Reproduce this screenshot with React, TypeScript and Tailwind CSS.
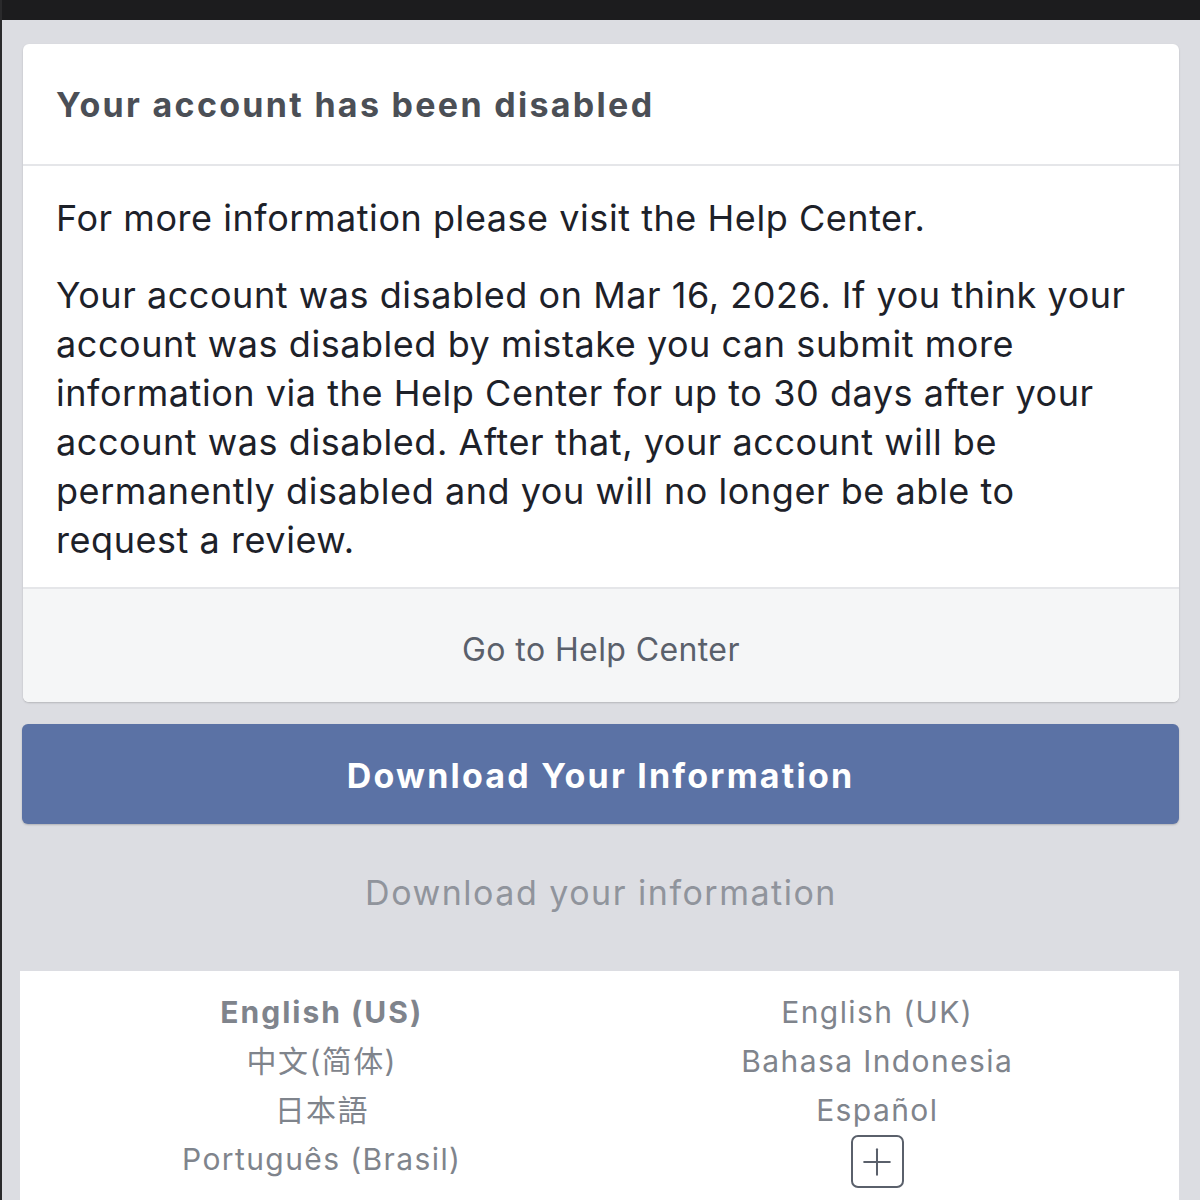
import { Plus } from 'lucide-react'

const leftLangs = ['English (US)', '中文(简体)', '日本語', 'Português (Brasil)']
const rightLangs = ['English (UK)', 'Bahasa Indonesia', 'Español']

export default function App() {
  return (
    <div
      className="w-[1200px] h-[1200px] overflow-hidden bg-[#dcdde2] border-l-2 border-[#2a2a2c] flex flex-col"
      style={{ fontFamily: 'Inter, "Noto Sans CJK SC", sans-serif' }}
    >
      <div className="h-[20px] bg-[#1c1c1e] -ml-[2px] shrink-0" />

      <div className="pl-[21px] pr-[21px] pt-[24px] flex flex-col">
        <div className="bg-white rounded-[6px] shadow-[0_1px_2px_rgba(0,0,0,0.18)] overflow-hidden">
          <div className="h-[122px] border-b-2 border-[#e5e6e9] pl-[33px] flex items-center pt-[1px]">
            <h1 className="text-[34px] font-bold text-[#4b4f56] tracking-[2.3px]">Your account has been disabled</h1>
          </div>
          <div className="pl-[33px] pr-[50px] pt-[28px] pb-[22px] text-[36px] leading-[49px] text-[#1d2129] tracking-[0.55px] border-b-2 border-[#e5e6e9]">
            <p className="mb-[28px]">For more information please visit the Help Center.</p>
            <p>
              Your account was disabled on Mar 16, 2026. If you think your account was disabled by mistake you can
              submit more information via the Help Center for up to 30 days after your account was disabled. After
              that, your account will be permanently disabled and you will no longer be able to request a review.
            </p>
          </div>
          <div className="h-[113px] bg-[#f5f6f7] flex items-center justify-center pt-[8px]">
            <span className="text-[32px] tracking-[0.4px] text-[#5a606b]">Go to Help Center</span>
          </div>
        </div>

        <button className="mt-[22px] -ml-[1px] h-[100px] rounded-[6px] bg-[#5b72a5] shadow-[0_1px_2px_rgba(0,0,0,0.2)] flex items-center justify-center pt-[2px]">
          <span className="text-[34px] font-bold tracking-[2.2px] text-white">Download Your Information</span>
        </button>

        <div className="h-[147px] flex items-center justify-center pb-[10px]">
          <span className="text-[34px] tracking-[1.5px] text-[#90949c]">Download your information</span>
        </div>
      </div>

      <div className="ml-[18px] mr-[21px] flex-1 bg-white grid grid-cols-2 px-[24px] pt-[17px] text-[30px] leading-[49px] tracking-[1.4px] text-[#7f848c]">
        <div className="flex flex-col items-center">
          {leftLangs.map((l, i) => (
            <span key={l} className={i === 0 ? 'font-bold tracking-[2px]' : ''}>{l}</span>
          ))}
        </div>
        <div className="flex flex-col items-center">
          {rightLangs.map(l => (
            <span key={l}>{l}</span>
          ))}
          <div className="w-[53px] h-[53px] border-2 border-[#5a606b] rounded-[7px] flex items-center justify-center">
            <Plus size={44} strokeWidth={1.1} className="text-[#5a606b]" />
          </div>
        </div>
      </div>
    </div>
  )
}
